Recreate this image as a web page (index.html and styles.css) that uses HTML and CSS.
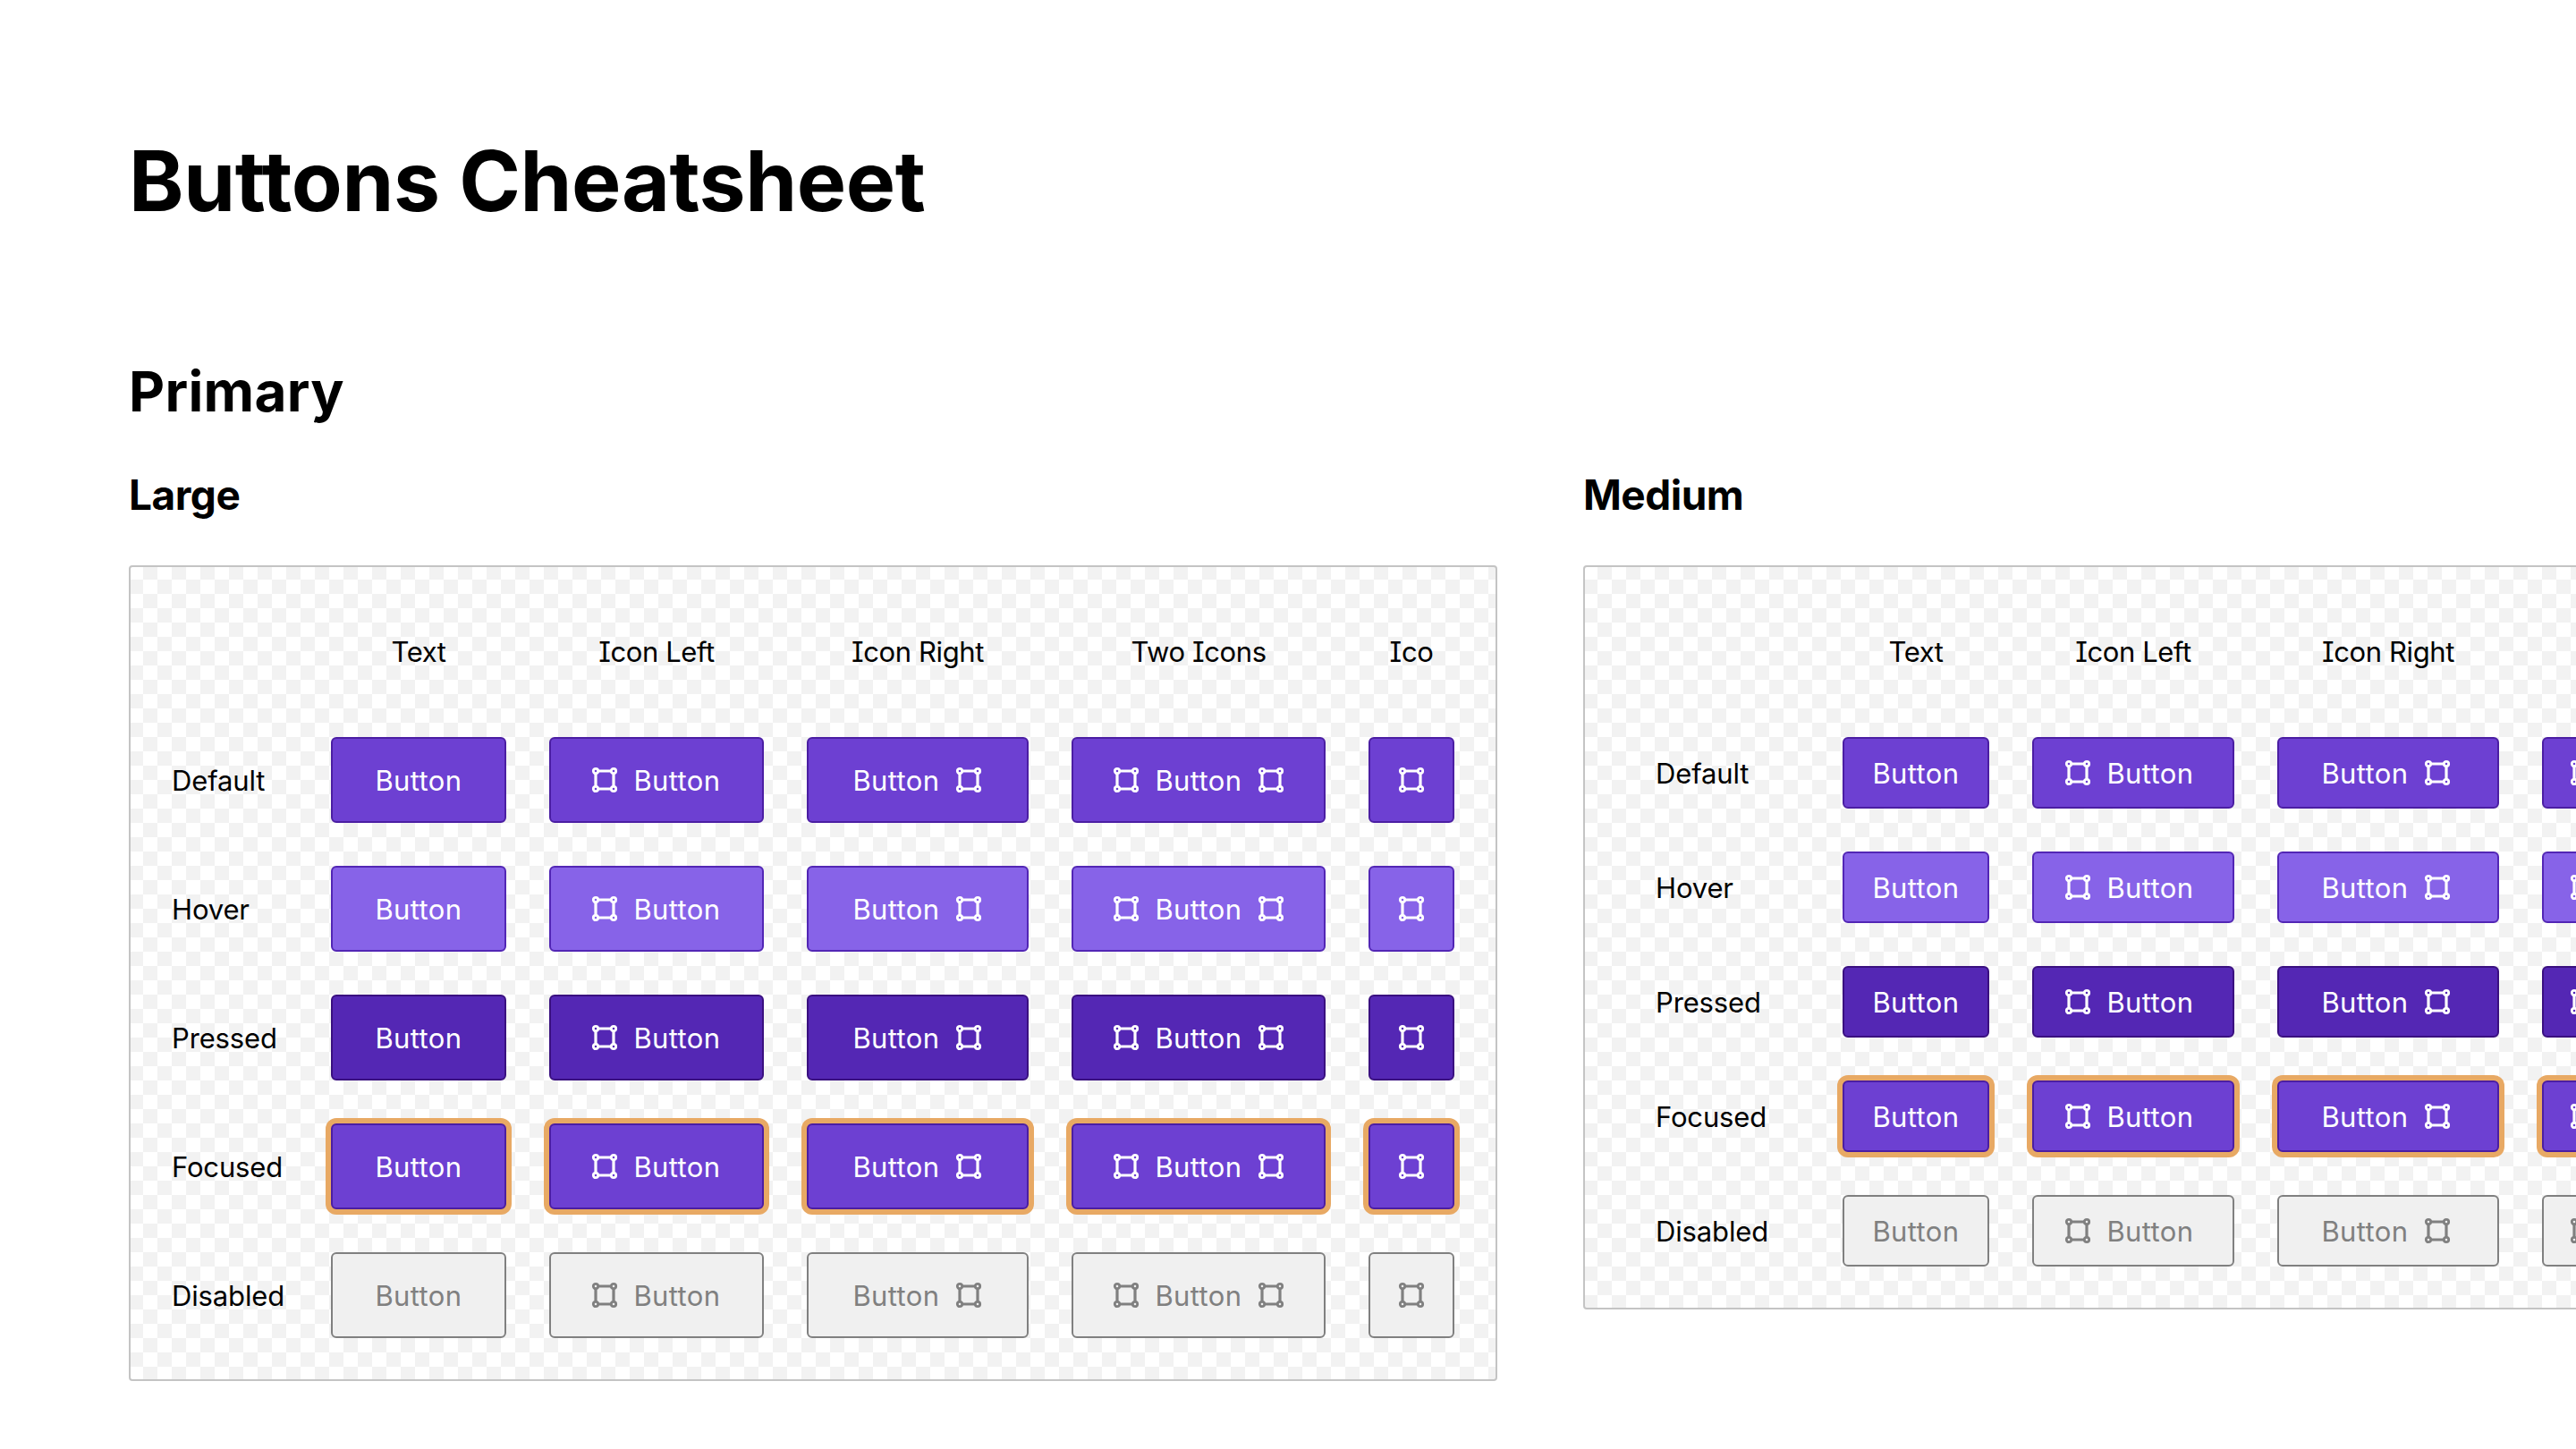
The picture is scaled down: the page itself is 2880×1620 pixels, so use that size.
FILE: index.html
```html
<!DOCTYPE html>
<html lang="en">
<head>
<meta charset="utf-8">
<title>Buttons Cheatsheet</title>
<link rel="stylesheet" href="styles.css">
</head>
<body>
<svg class="defs" width="0" height="0" aria-hidden="true"><symbol id="i" viewBox="0 0 32 32"><path d="M8.5 6H23.5M26 8.5V23.5M23.5 26H8.5M6 23.5V8.5" fill="none" stroke="currentColor" stroke-width="3.2"/><g fill="none" stroke="currentColor" stroke-width="2.8"><circle cx="6" cy="6" r="2.7"/><circle cx="26" cy="6" r="2.7"/><circle cx="26" cy="26" r="2.7"/><circle cx="6" cy="26" r="2.7"/></g></symbol></svg>
<main class="page">
<h1 class="title">Buttons Cheatsheet</h1>
<h2 class="section">Primary</h2>
<div class="groups">
<section class="group">
<h3 class="size">Large</h3>
<div class="panel panel-lg">
<span></span><span class="head">Text</span><span class="head">Icon Left</span><span class="head">Icon Right</span><span class="head">Two Icons</span><span class="head">Ico</span>

<span class="label">Default</span>
<button class="btn"><span>Button</span></button>
<button class="btn lead"><svg class="ico"><use href="#i"/></svg><span>Button</span></button>
<button class="btn"><span>Button</span><svg class="ico"><use href="#i"/></svg></button>
<button class="btn"><svg class="ico"><use href="#i"/></svg><span>Button</span><svg class="ico"><use href="#i"/></svg></button>
<button class="btn" aria-label="Button"><svg class="ico"><use href="#i"/></svg></button>

<span class="label">Hover</span>
<button class="btn hover"><span>Button</span></button>
<button class="btn hover lead"><svg class="ico"><use href="#i"/></svg><span>Button</span></button>
<button class="btn hover"><span>Button</span><svg class="ico"><use href="#i"/></svg></button>
<button class="btn hover"><svg class="ico"><use href="#i"/></svg><span>Button</span><svg class="ico"><use href="#i"/></svg></button>
<button class="btn hover" aria-label="Button"><svg class="ico"><use href="#i"/></svg></button>

<span class="label">Pressed</span>
<button class="btn pressed"><span>Button</span></button>
<button class="btn pressed lead"><svg class="ico"><use href="#i"/></svg><span>Button</span></button>
<button class="btn pressed"><span>Button</span><svg class="ico"><use href="#i"/></svg></button>
<button class="btn pressed"><svg class="ico"><use href="#i"/></svg><span>Button</span><svg class="ico"><use href="#i"/></svg></button>
<button class="btn pressed" aria-label="Button"><svg class="ico"><use href="#i"/></svg></button>

<span class="label">Focused</span>
<button class="btn focused"><span>Button</span></button>
<button class="btn focused lead"><svg class="ico"><use href="#i"/></svg><span>Button</span></button>
<button class="btn focused"><span>Button</span><svg class="ico"><use href="#i"/></svg></button>
<button class="btn focused"><svg class="ico"><use href="#i"/></svg><span>Button</span><svg class="ico"><use href="#i"/></svg></button>
<button class="btn focused" aria-label="Button"><svg class="ico"><use href="#i"/></svg></button>

<span class="label">Disabled</span>
<button class="btn disabled"><span>Button</span></button>
<button class="btn disabled lead"><svg class="ico"><use href="#i"/></svg><span>Button</span></button>
<button class="btn disabled"><span>Button</span><svg class="ico"><use href="#i"/></svg></button>
<button class="btn disabled"><svg class="ico"><use href="#i"/></svg><span>Button</span><svg class="ico"><use href="#i"/></svg></button>
<button class="btn disabled" aria-label="Button"><svg class="ico"><use href="#i"/></svg></button>
</div>
</section>

<section class="group">
<h3 class="size">Medium</h3>
<div class="panel panel-md">
<span></span><span class="head">Text</span><span class="head">Icon Left</span><span class="head">Icon Right</span><span></span>

<span class="label">Default</span>
<button class="btn"><span>Button</span></button>
<button class="btn lead"><svg class="ico"><use href="#i"/></svg><span>Button</span></button>
<button class="btn trail"><span>Button</span><svg class="ico"><use href="#i"/></svg></button>
<button class="btn offscreen" aria-label="Button"><svg class="ico"><use href="#i"/></svg></button>

<span class="label">Hover</span>
<button class="btn hover"><span>Button</span></button>
<button class="btn hover lead"><svg class="ico"><use href="#i"/></svg><span>Button</span></button>
<button class="btn hover trail"><span>Button</span><svg class="ico"><use href="#i"/></svg></button>
<button class="btn hover offscreen" aria-label="Button"><svg class="ico"><use href="#i"/></svg></button>

<span class="label">Pressed</span>
<button class="btn pressed"><span>Button</span></button>
<button class="btn pressed lead"><svg class="ico"><use href="#i"/></svg><span>Button</span></button>
<button class="btn pressed trail"><span>Button</span><svg class="ico"><use href="#i"/></svg></button>
<button class="btn pressed offscreen" aria-label="Button"><svg class="ico"><use href="#i"/></svg></button>

<span class="label">Focused</span>
<button class="btn focused"><span>Button</span></button>
<button class="btn focused lead"><svg class="ico"><use href="#i"/></svg><span>Button</span></button>
<button class="btn focused trail"><span>Button</span><svg class="ico"><use href="#i"/></svg></button>
<button class="btn focused offscreen" aria-label="Button"><svg class="ico"><use href="#i"/></svg></button>

<span class="label">Disabled</span>
<button class="btn disabled"><span>Button</span></button>
<button class="btn disabled lead"><svg class="ico"><use href="#i"/></svg><span>Button</span></button>
<button class="btn disabled trail"><span>Button</span><svg class="ico"><use href="#i"/></svg></button>
<button class="btn disabled offscreen" aria-label="Button"><svg class="ico"><use href="#i"/></svg></button>
</div>
</section>
</div>
</main>
</body>
</html>
```
FILE: styles.css
```css
html, body {
  margin: 0;
  background: #fff;
  overflow: hidden;
}
body {
  width: 2880px;
  height: 1620px;
  font-family: Inter, "Noto Sans", sans-serif;
  font-feature-settings: "cv08" 1;
  color: #000;
}
.defs { position: absolute; }
.page { padding: 146px 0 0 144px; }
.title {
  margin: 0;
  font-size: 93px;
  line-height: 112px;
  font-weight: 700;
  letter-spacing: -0.4px;
}
.section {
  margin: 142px 0 0;
  font-size: 62px;
  line-height: 76px;
  font-weight: 700;
  letter-spacing: 0.3px;
}
.size {
  margin: 49px 0 51px;
  font-size: 46px;
  line-height: 56px;
  font-weight: 700;
  letter-spacing: -0.5px;
}
.groups {
  display: flex;
  gap: 96px;
  align-items: flex-start;
}
.group { flex: none; }
.panel {
  display: grid;
  gap: 48px;
  align-items: center;
  width: fit-content;
  box-sizing: border-box;
  border: 2px solid #c4c4c4;
  border-radius: 4px;
  background-color: #fff;
  background-image: repeating-conic-gradient(#f2f2f2 0 25%, #fff 25% 50%);
  background-size: 32px 32px;
  background-origin: border-box;
  font-size: 31px;
  letter-spacing: -0.4px;
}
.panel-lg {
  padding: 46px;
  grid-template-columns: 130px 196px 240px 248px 284px 96px;
  grid-template-rows: 96px repeat(5, 96px);
}
.panel-md {
  padding: 46px 46px 46px 79px;
  grid-template-columns: 161px 164px 226px 248px 284px;
  grid-template-rows: 96px repeat(5, 80px);
}
.head { text-align: center; }
.label { letter-spacing: -0.15px; }
.btn {
  display: flex;
  align-items: center;
  justify-content: center;
  gap: 16px;
  height: 100%;
  padding: 0;
  box-sizing: border-box;
  border: 2px solid #4b1ea3;
  border-radius: 6px;
  background: #6d40d2;
  color: #fff;
  font: inherit;
  font-feature-settings: inherit;
  letter-spacing: 0.4px;
}
.lead { padding-right: 2px; }
.panel-md .lead { padding-right: 10px; }
.trail { padding-right: 4px; }
.offscreen {
  justify-content: flex-start;
  padding-left: 28px;
}
.ico {
  flex: none;
  width: 32px;
  height: 32px;
}
.hover { background: #8763e8; border-color: #5226b5; }
.pressed { background: #5427b4; border-color: #3a1080; }
.focused { box-shadow: 0 0 0 6px #e8a964; }
.disabled { background: #f0f0f0; border-color: #808080; color: #808080; }
```
